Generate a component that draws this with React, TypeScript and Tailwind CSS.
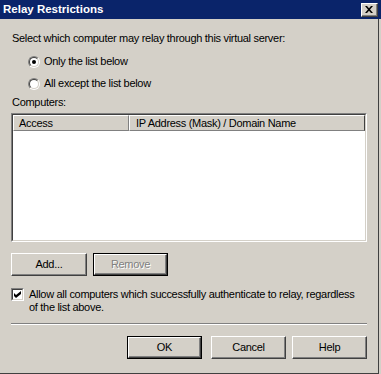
import React from 'react';

function Radio({ checked }: { checked?: boolean }) {
  return (
    <div className="w-[12px] h-[12px] rounded-full border border-t-[#808080] border-l-[#808080] border-b-white border-r-white">
      <div className="w-full h-full rounded-full border border-t-[#404040] border-l-[#404040] border-b-[#d4d0c8] border-r-[#d4d0c8] bg-white flex items-center justify-center">
        {checked && <div className="w-[4px] h-[4px] rounded-full bg-black" />}
      </div>
    </div>
  );
}

function Button({
  label,
  width,
  isDefault,
  disabled,
}: {
  label: string;
  width: string;
  isDefault?: boolean;
  disabled?: boolean;
}) {
  return (
    <div className={`${width} h-[23px] ${isDefault ? 'border border-black' : ''} flex`}>
      <div
        className={`flex-1 flex items-center justify-center border border-t-white border-l-white border-r-[#404040] border-b-[#404040] shadow-[inset_-1px_-1px_0_#808080] ${
          disabled ? 'text-[#808080] [text-shadow:1px_1px_0_#fff]' : 'text-black'
        }`}
      >
        {label}
      </div>
    </div>
  );
}

export default function App() {
  return (
    <div className="w-[381px] h-[374px] bg-[#d4d0c8] flex flex-col font-['Liberation_Sans',Arial,sans-serif] text-[11px] tracking-[-0.3px] text-black leading-[13px] overflow-hidden">
      {/* title bar */}
      <div className="h-[19px] bg-[#0a246a] flex items-center justify-between pl-[3px] pr-[3px]">
        <span className="text-white font-bold text-[11.5px] tracking-normal">Relay Restrictions</span>
        <div className="w-[17px] h-[14px] bg-[#d4d0c8] border border-t-white border-l-white border-r-[#404040] border-b-[#404040] shadow-[inset_-1px_-1px_0_#808080] flex items-center justify-center">
          <svg width="8" height="7" viewBox="0 0 8 7" className="mr-[1px]">
            <path d="M0 0h2l2 2.2L6 0h2L5 3.5 8 7H6L4 4.8 2 7H0l3-3.5z" fill="#000" />
          </svg>
        </div>
      </div>

      {/* body */}
      <div className="flex-1 flex flex-col pl-[11px] pr-[11px] pt-[13px] border-r border-b border-[#404040] mr-[2px]">
        <p className="pl-[1px]">Select which computer may relay through this virtual server:</p>

        <div className="mt-[10px] pl-[17px] flex flex-col gap-[9px]">
          <div className="flex items-center gap-[4px] h-[13px]">
            <Radio checked />
            <span>Only the list below</span>
          </div>
          <div className="flex items-center gap-[4px] h-[13px]">
            <Radio />
            <span>All except the list below</span>
          </div>
        </div>

        <p className="mt-[6px] pl-[1px]">Computers:</p>

        {/* list view */}
        <div className="mt-[4px] h-[129px] border border-t-[#808080] border-l-[#808080] border-b-white border-r-white">
          <div className="h-full border border-t-[#404040] border-l-[#404040] border-b-[#d4d0c8] border-r-[#d4d0c8] bg-white flex flex-col">
            <div className="h-[16px] flex bg-[#d4d0c8]">
              <div className="w-[116px] border-t border-l border-t-white border-l-white border-r border-b border-r-[#808080] border-b-[#808080] pl-[5px] flex items-center">
                Access
              </div>
              <div className="flex-1 border-t border-l border-t-white border-l-white border-r border-b border-r-[#404040] border-b-[#808080] pl-[6px] flex items-center">
                IP Address (Mask) / Domain Name
              </div>
            </div>
          </div>
        </div>

        <div className="mt-[11px] flex gap-[6px]">
          <Button label="Add..." width="w-[76px]" />
          <Button label="Remove" width="w-[75px]" isDefault disabled />
        </div>

        <div className="mt-[12px] flex gap-[5px]">
          <div className="w-[13px] h-[13px] shrink-0 border border-t-[#808080] border-l-[#808080] border-b-white border-r-white">
            <div className="w-full h-full border border-t-[#404040] border-l-[#404040] border-b-[#d4d0c8] border-r-[#d4d0c8] bg-white flex items-center justify-center">
              <svg width="7" height="7" viewBox="0 0 7 7">
                <path d="M0 2L2 4L7 0V3L2 7L0 5Z" fill="#000" />
              </svg>
            </div>
          </div>
          <p>
            Allow all computers which successfully authenticate to relay, regardless
            <br />
            of the list above.
          </p>
        </div>

        <div className="mt-[9px] h-[2px] border-t border-t-[#808080] border-b border-b-white" />

        <div className="mt-[11px] flex justify-end">
          <Button label="OK" width="w-[75px]" isDefault />
          <div className="ml-[9px]">
            <Button label="Cancel" width="w-[75px]" />
          </div>
          <div className="ml-[6px]">
            <Button label="Help" width="w-[75px]" />
          </div>
        </div>
      </div>
    </div>
  );
}
